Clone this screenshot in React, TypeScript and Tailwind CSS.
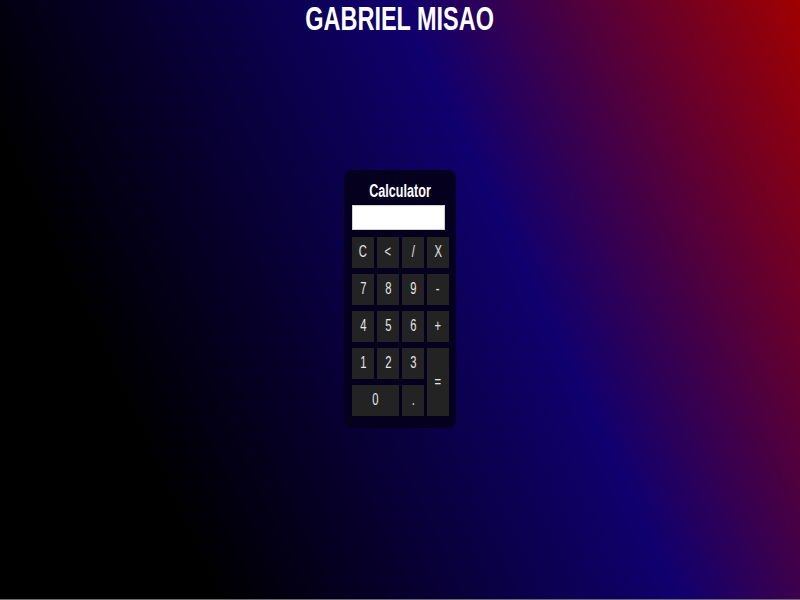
import React from "react";

const keys: { label: string; cls?: string }[] = [
  { label: "C" },
  { label: "<" },
  { label: "/" },
  { label: "X" },
  { label: "7" },
  { label: "8" },
  { label: "9" },
  { label: "-" },
  { label: "4" },
  { label: "5" },
  { label: "6" },
  { label: "+" },
  { label: "1" },
  { label: "2" },
  { label: "3" },
  { label: "=", cls: "row-span-2" },
  { label: "0", cls: "col-span-2" },
  { label: "." },
];

export default function App() {
  return (
    <div
      className="grid h-[600px] w-full grid-rows-[44px_1fr_46px] border-b border-[#6a6a6a] bg-[linear-gradient(65deg,#000000_20%,#10006e_63%,#a00000_100%)] text-white"
      style={{ fontFamily: '"Liberation Sans", Arial, sans-serif' }}
    >
      <h1 className="text-center text-[34px] font-bold leading-[36px]">
        <span className="inline-block scale-x-[0.69]">GABRIEL MISAO</span>
      </h1>
      <div className="flex items-center justify-center">
        <div className="flex w-[112px] flex-col items-start rounded-lg bg-[#06001f] px-2 pb-3 pt-[10px]">
          <h2 className="w-full text-center text-[18px] font-bold leading-[22px]">
            <span className="inline-block scale-x-[0.7]">Calculator</span>
          </h2>
          <div className="mt-[3px] h-[25px] w-[93px] border border-[#d0d0d0] bg-white" />
          <div className="mt-[7px] grid grid-cols-[repeat(4,22px)] grid-rows-[repeat(5,31px)] gap-x-[3px] gap-y-[6px]">
            {keys.map((k) => (
              <div
                key={k.label}
                className={`flex items-center justify-center bg-[#232323] text-[16px] text-[#e6e6e6] ${k.cls ?? ""}`}
              >
                <span className="inline-block scale-x-[0.7]">{k.label}</span>
              </div>
            ))}
          </div>
        </div>
      </div>
      <div />
    </div>
  );
}
